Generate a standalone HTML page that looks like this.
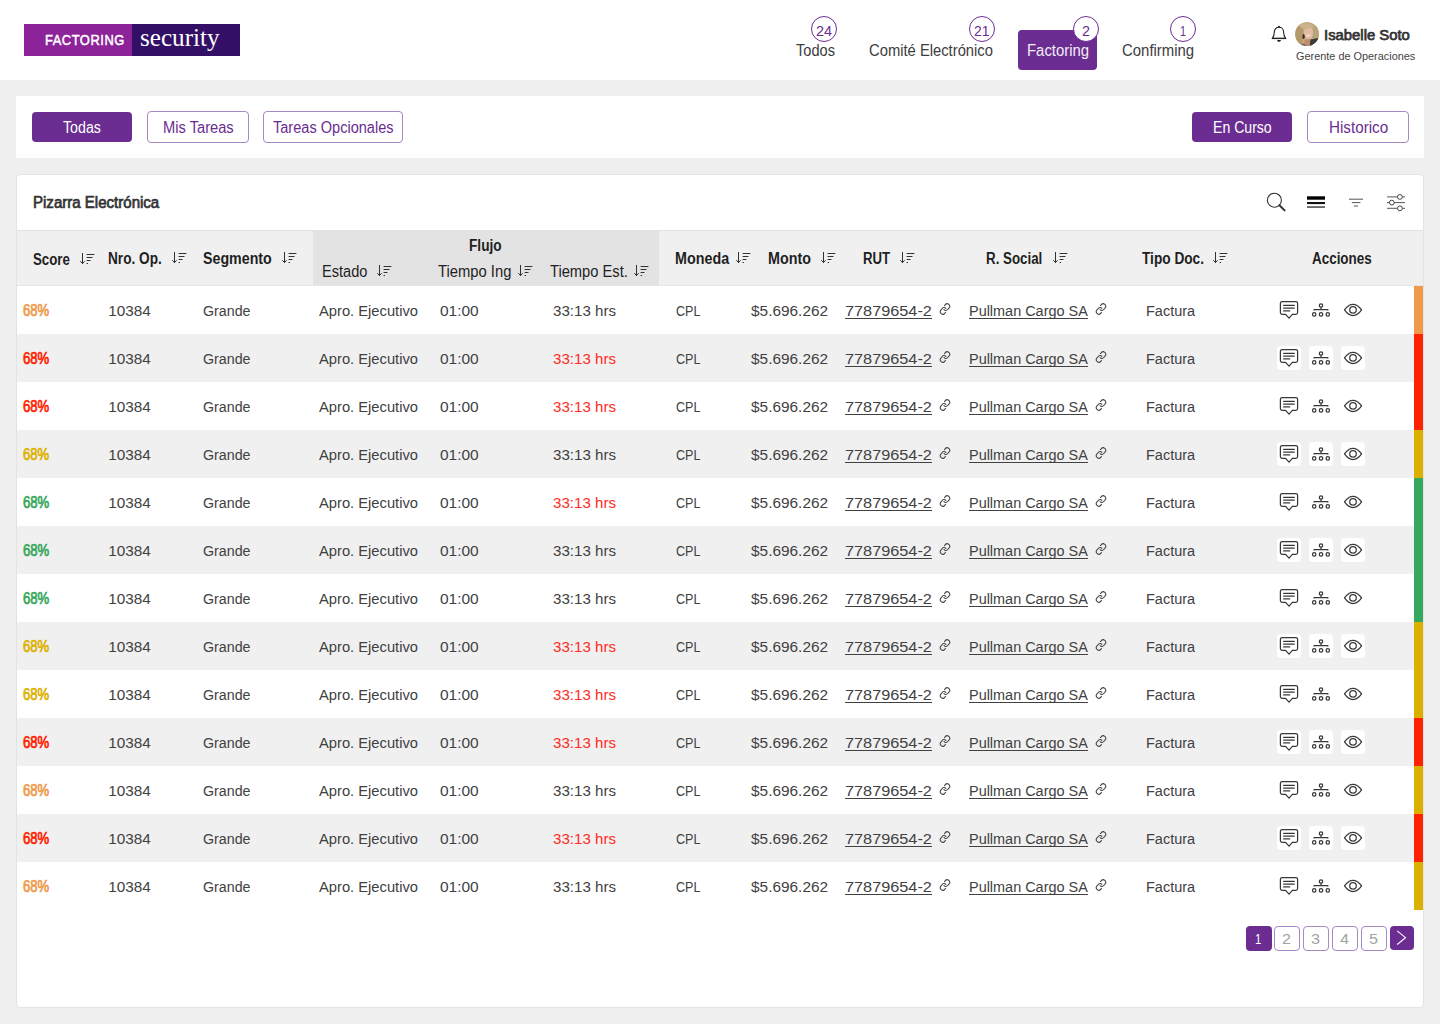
<!DOCTYPE html>
<html><head><meta charset="utf-8"><style>
html,body{margin:0;padding:0;width:1440px;height:1024px;overflow:hidden;background:#efefef;}
body{position:relative;font-family:"Liberation Sans", sans-serif;}
.t{position:absolute;white-space:nowrap;transform-origin:0 0;}
</style></head><body>
<div style="position:absolute;left:0px;top:0px;width:1440px;height:80px;background:#fff"></div>
<div style="position:absolute;left:24px;top:24px;width:108px;height:32px;background:#8c2398"></div>
<div style="position:absolute;left:132px;top:24px;width:108px;height:32px;background:#331066"></div>
<div class="t" style="left:45.00px;top:-10.00px;font-size:14.8px;line-height:100px;color:#fff;font-weight:normal;font-family:'Liberation Sans', sans-serif;transform:scaleX(0.8728);-webkit-text-stroke:0.5px #fff;letter-spacing:0.6px;">FACTORING</div>
<div class="t" style="left:139.75px;top:-12.00px;font-size:25.5px;line-height:100px;color:#fff;font-weight:normal;font-family:'Liberation Serif', serif;transform:scaleX(0.9853);">security</div>
<div style="position:absolute;left:1018px;top:30px;width:79px;height:40px;background:#6b2d91;border-radius:4px"></div>
<div class="t" style="left:795.90px;top:1.00px;font-size:15.6px;line-height:100px;color:#3d3d3d;font-weight:normal;font-family:'Liberation Sans', sans-serif;transform:scaleX(0.9370);">Todos</div>
<div class="t" style="left:868.70px;top:1.00px;font-size:15.6px;line-height:100px;color:#3d3d3d;font-weight:normal;font-family:'Liberation Sans', sans-serif;transform:scaleX(0.9472);">Comité Electrónico</div>
<div class="t" style="left:1026.70px;top:1.00px;font-size:15.6px;line-height:100px;color:#f3eef7;font-weight:normal;font-family:'Liberation Sans', sans-serif;transform:scaleX(0.9551);">Factoring</div>
<div class="t" style="left:1121.80px;top:1.00px;font-size:15.6px;line-height:100px;color:#3d3d3d;font-weight:normal;font-family:'Liberation Sans', sans-serif;transform:scaleX(0.9572);">Confirming</div>
<div style="position:absolute;left:810.5px;top:16.0px;width:26px;height:26px;box-sizing:border-box;border:1px solid #6b2d91;border-radius:50%;background:transparent"></div>
<div class="t" style="left:815.90px;top:-19.00px;font-size:15.5px;line-height:100px;color:#6b2d91;font-weight:normal;font-family:'Liberation Sans', sans-serif;transform:scaleX(0.9341);">24</div>
<div style="position:absolute;left:968.5px;top:16.0px;width:26px;height:26px;box-sizing:border-box;border:1px solid #6b2d91;border-radius:50%;background:transparent"></div>
<div class="t" style="left:974.00px;top:-19.00px;font-size:15.5px;line-height:100px;color:#6b2d91;font-weight:normal;font-family:'Liberation Sans', sans-serif;transform:scaleX(0.8993);">21</div>
<div style="position:absolute;left:1072.5px;top:16.0px;width:26px;height:26px;box-sizing:border-box;border:1px solid #6b2d91;border-radius:50%;background:#fff"></div>
<div class="t" style="left:1081.50px;top:-19.00px;font-size:15.5px;line-height:100px;color:#6b2d91;font-weight:normal;font-family:'Liberation Sans', sans-serif;transform:scaleX(0.9283);">2</div>
<div style="position:absolute;left:1169.5px;top:16.0px;width:26px;height:26px;box-sizing:border-box;border:1px solid #6b2d91;border-radius:50%;background:transparent"></div>
<div class="t" style="left:1179.50px;top:-19.00px;font-size:15.5px;line-height:100px;color:#6b2d91;font-weight:normal;font-family:'Liberation Sans', sans-serif;transform:scaleX(0.6962);">1</div>
<svg style="position:absolute;left:1270px;top:24px" width="18" height="20" viewBox="0 0 18 20" fill="none" stroke="#222" stroke-width="1.1"><path d="M2.4 14.4 C3.6 12.6 4.3 11.2 4.3 8.2 C4.3 5 6.3 3.3 9 3.3 C11.7 3.3 13.6 5 13.6 8.2 C13.6 11.2 14.3 12.6 15.6 14.4 Z" stroke-linejoin="round"/><path d="M1.8 14.5 H16.2" stroke-width="1.2"/><circle cx="8.95" cy="2.7" r="1" fill="#222" stroke="none"/><path d="M7.1 16 H10.9 C10.9 17.1 10.1 17.8 9 17.8 C7.9 17.8 7.1 17.1 7.1 16 Z" fill="#222" stroke="none"/></svg>
<svg style="position:absolute;left:1295px;top:22px" width="24" height="24" viewBox="0 0 24 24"><defs><clipPath id="avc"><circle cx="12" cy="12" r="12"/></clipPath></defs><g clip-path="url(#avc)"><rect x="-2" y="-2" width="28" height="28" fill="#c2a97f"/><ellipse cx="4.5" cy="13" rx="4" ry="9" fill="#b49a6a"/><ellipse cx="20.5" cy="12" rx="3.5" ry="8" fill="#b8a47a"/><ellipse cx="13" cy="21.5" rx="4.2" ry="4.5" fill="#c08d6c"/><path d="M15.5 17.5 L25 15.5 L25 26 L14.5 26 Z" fill="#3b3a36"/><ellipse cx="6" cy="24.5" rx="6" ry="3" fill="#6b6a65"/><ellipse cx="13.5" cy="10.8" rx="4.6" ry="6.3" fill="#e2bca2"/><ellipse cx="13.4" cy="13.6" rx="2.4" ry="1" fill="#f2ddd0"/><ellipse cx="8.6" cy="14.5" rx="1.2" ry="2.6" fill="#3d2c22"/><ellipse cx="11.5" cy="4.2" rx="6.5" ry="2.6" fill="#cbb38c"/></g></svg>
<div class="t" style="left:1323.60px;top:-15.00px;font-size:15.3px;line-height:100px;color:#333;font-weight:normal;font-family:'Liberation Sans', sans-serif;transform:scaleX(0.9710);-webkit-text-stroke:0.75px #333;">Isabelle Soto</div>
<div class="t" style="left:1295.70px;top:6.00px;font-size:11.3px;line-height:100px;color:#444;font-weight:normal;font-family:'Liberation Sans', sans-serif;transform:scaleX(0.9641);">Gerente de Operaciones</div>
<div style="position:absolute;left:0px;top:80px;width:1440px;height:944px;background:#efefef"></div>
<div style="position:absolute;left:16px;top:96px;width:1408px;height:62px;background:#fff"></div>
<div style="position:absolute;left:32px;top:112px;width:100px;height:30px;background:#6b2d91;border-radius:4px"></div>
<div class="t" style="left:62.90px;top:78.00px;font-size:16px;line-height:100px;color:#fff;font-weight:normal;font-family:'Liberation Sans', sans-serif;transform:scaleX(0.8878);">Todas</div>
<div style="position:absolute;left:147.1px;top:111.1px;width:101.7px;height:31.8px;box-sizing:border-box;border:1.7px solid #a887c5;border-radius:4px"></div>
<div class="t" style="left:162.50px;top:78.00px;font-size:16px;line-height:100px;color:#6b2d91;font-weight:normal;font-family:'Liberation Sans', sans-serif;transform:scaleX(0.9175);">Mis Tareas</div>
<div style="position:absolute;left:263.1px;top:111.1px;width:139.7px;height:31.8px;box-sizing:border-box;border:1.7px solid #a887c5;border-radius:4px"></div>
<div class="t" style="left:272.80px;top:78.00px;font-size:16px;line-height:100px;color:#6b2d91;font-weight:normal;font-family:'Liberation Sans', sans-serif;transform:scaleX(0.9094);">Tareas Opcionales</div>
<div style="position:absolute;left:1192px;top:112px;width:100px;height:30px;background:#6b2d91;border-radius:4px"></div>
<div class="t" style="left:1212.50px;top:78.00px;font-size:16px;line-height:100px;color:#fff;font-weight:normal;font-family:'Liberation Sans', sans-serif;transform:scaleX(0.8802);">En Curso</div>
<div style="position:absolute;left:1307.1px;top:111.1px;width:101.7px;height:31.8px;box-sizing:border-box;border:1.7px solid #a887c5;border-radius:4px"></div>
<div class="t" style="left:1328.90px;top:78.00px;font-size:16px;line-height:100px;color:#6b2d91;font-weight:normal;font-family:'Liberation Sans', sans-serif;transform:scaleX(0.9512);">Historico</div>
<div style="position:absolute;left:16px;top:174px;width:1408px;height:834px;box-sizing:border-box;background:#fff;border:1px solid #e3e3e3;border-radius:4px"></div>
<div class="t" style="left:32.50px;top:153.00px;font-size:16px;line-height:100px;color:#333;font-weight:normal;font-family:'Liberation Sans', sans-serif;transform:scaleX(0.9401);-webkit-text-stroke:0.7px #333;">Pizarra Electrónica</div>
<svg style="position:absolute;left:1264px;top:190px" width="160" height="24" viewBox="1264 190 160 24" fill="none" stroke="#333"><circle cx="1274.4" cy="200.2" r="7" stroke-width="1.1"/><path d="M1279.4 205.2 L1284.6 210.4" stroke-width="2" stroke-linecap="round"/><rect x="1307" y="196.3" width="18" height="3.4" fill="#000" stroke="none"/><rect x="1307" y="202" width="18" height="2.1" fill="#111" stroke="none"/><rect x="1307" y="206.3" width="18" height="1.5" fill="#444" stroke="none"/><path d="M1349 199.2 H1363 M1351.8 202.6 H1360.4 M1353.8 206 H1358" stroke="#555" stroke-width="1"/><path d="M1387 196.9 H1405 M1387 202.6 H1405 M1387 208.3 H1405" stroke="#555" stroke-width="1"/><circle cx="1399.9" cy="196.9" r="2.4" fill="#fff" stroke="#444" stroke-width="1"/><circle cx="1391.8" cy="202.6" r="2.4" fill="#fff" stroke="#444" stroke-width="1"/><circle cx="1399.9" cy="208.3" r="2.4" fill="#fff" stroke="#444" stroke-width="1"/></svg>
<div style="position:absolute;left:17px;top:230px;width:1406px;height:1px;background:#e3e3e3"></div>
<div style="position:absolute;left:17px;top:231px;width:1406px;height:55px;background:#f0f0f0"></div>
<div style="position:absolute;left:313px;top:231px;width:346px;height:55px;background:#e3e3e3"></div>
<div style="position:absolute;left:17px;top:285px;width:1406px;height:1px;background:#e6e6e6"></div>
<div class="t" style="left:33.40px;top:210.00px;font-size:16px;line-height:100px;color:#1f1f1f;font-weight:bold;font-family:'Liberation Sans', sans-serif;transform:scaleX(0.8299);">Score</div>
<svg style="position:absolute;left:80px;top:253px" width="15" height="12" viewBox="0 0 15 12" fill="none" stroke="#333" stroke-width="1" stroke-linecap="round"><path d="M2.5 0.3 V10.6 M0.6 8.5 L2.5 10.6 L4.4 8.5"/><path d="M7 1.5 H14 M7 4.5 H12.1 M7 7.5 H10.1 M7 10.5 H7.6"/></svg>
<div class="t" style="left:107.50px;top:209.00px;font-size:16px;line-height:100px;color:#1f1f1f;font-weight:bold;font-family:'Liberation Sans', sans-serif;transform:scaleX(0.8518);">Nro. Op.</div>
<svg style="position:absolute;left:172px;top:251.8px" width="15" height="12" viewBox="0 0 15 12" fill="none" stroke="#333" stroke-width="1" stroke-linecap="round"><path d="M2.5 0.3 V10.6 M0.6 8.5 L2.5 10.6 L4.4 8.5"/><path d="M7 1.5 H14 M7 4.5 H12.1 M7 7.5 H10.1 M7 10.5 H7.6"/></svg>
<div class="t" style="left:203.25px;top:209.00px;font-size:16px;line-height:100px;color:#1f1f1f;font-weight:bold;font-family:'Liberation Sans', sans-serif;transform:scaleX(0.8889);">Segmento</div>
<svg style="position:absolute;left:281.75px;top:251.8px" width="15" height="12" viewBox="0 0 15 12" fill="none" stroke="#333" stroke-width="1" stroke-linecap="round"><path d="M2.5 0.3 V10.6 M0.6 8.5 L2.5 10.6 L4.4 8.5"/><path d="M7 1.5 H14 M7 4.5 H12.1 M7 7.5 H10.1 M7 10.5 H7.6"/></svg>
<div class="t" style="left:468.70px;top:196.00px;font-size:16px;line-height:100px;color:#1f1f1f;font-weight:bold;font-family:'Liberation Sans', sans-serif;transform:scaleX(0.8532);">Flujo</div>
<div class="t" style="left:321.60px;top:222.00px;font-size:16px;line-height:100px;color:#1f1f1f;font-weight:normal;font-family:'Liberation Sans', sans-serif;transform:scaleX(0.9115);">Estado</div>
<svg style="position:absolute;left:377px;top:265px" width="15" height="12" viewBox="0 0 15 12" fill="none" stroke="#333" stroke-width="1" stroke-linecap="round"><path d="M2.5 0.3 V10.6 M0.6 8.5 L2.5 10.6 L4.4 8.5"/><path d="M7 1.5 H14 M7 4.5 H12.1 M7 7.5 H10.1 M7 10.5 H7.6"/></svg>
<div class="t" style="left:438.30px;top:222.00px;font-size:16px;line-height:100px;color:#1f1f1f;font-weight:normal;font-family:'Liberation Sans', sans-serif;transform:scaleX(0.9240);">Tiempo Ing</div>
<svg style="position:absolute;left:517.5px;top:265px" width="15" height="12" viewBox="0 0 15 12" fill="none" stroke="#333" stroke-width="1" stroke-linecap="round"><path d="M2.5 0.3 V10.6 M0.6 8.5 L2.5 10.6 L4.4 8.5"/><path d="M7 1.5 H14 M7 4.5 H12.1 M7 7.5 H10.1 M7 10.5 H7.6"/></svg>
<div class="t" style="left:549.70px;top:222.00px;font-size:16px;line-height:100px;color:#1f1f1f;font-weight:normal;font-family:'Liberation Sans', sans-serif;transform:scaleX(0.9178);">Tiempo Est.</div>
<svg style="position:absolute;left:633.7px;top:265px" width="15" height="12" viewBox="0 0 15 12" fill="none" stroke="#333" stroke-width="1" stroke-linecap="round"><path d="M2.5 0.3 V10.6 M0.6 8.5 L2.5 10.6 L4.4 8.5"/><path d="M7 1.5 H14 M7 4.5 H12.1 M7 7.5 H10.1 M7 10.5 H7.6"/></svg>
<div class="t" style="left:675.30px;top:209.00px;font-size:16px;line-height:100px;color:#1f1f1f;font-weight:bold;font-family:'Liberation Sans', sans-serif;transform:scaleX(0.8950);">Moneda</div>
<svg style="position:absolute;left:736px;top:251.8px" width="15" height="12" viewBox="0 0 15 12" fill="none" stroke="#333" stroke-width="1" stroke-linecap="round"><path d="M2.5 0.3 V10.6 M0.6 8.5 L2.5 10.6 L4.4 8.5"/><path d="M7 1.5 H14 M7 4.5 H12.1 M7 7.5 H10.1 M7 10.5 H7.6"/></svg>
<div class="t" style="left:767.80px;top:209.00px;font-size:16px;line-height:100px;color:#1f1f1f;font-weight:bold;font-family:'Liberation Sans', sans-serif;transform:scaleX(0.8940);">Monto</div>
<svg style="position:absolute;left:820.6px;top:251.8px" width="15" height="12" viewBox="0 0 15 12" fill="none" stroke="#333" stroke-width="1" stroke-linecap="round"><path d="M2.5 0.3 V10.6 M0.6 8.5 L2.5 10.6 L4.4 8.5"/><path d="M7 1.5 H14 M7 4.5 H12.1 M7 7.5 H10.1 M7 10.5 H7.6"/></svg>
<div class="t" style="left:862.50px;top:209.00px;font-size:16px;line-height:100px;color:#1f1f1f;font-weight:bold;font-family:'Liberation Sans', sans-serif;transform:scaleX(0.8242);">RUT</div>
<svg style="position:absolute;left:899.7px;top:251.8px" width="15" height="12" viewBox="0 0 15 12" fill="none" stroke="#333" stroke-width="1" stroke-linecap="round"><path d="M2.5 0.3 V10.6 M0.6 8.5 L2.5 10.6 L4.4 8.5"/><path d="M7 1.5 H14 M7 4.5 H12.1 M7 7.5 H10.1 M7 10.5 H7.6"/></svg>
<div class="t" style="left:986.00px;top:209.00px;font-size:16px;line-height:100px;color:#1f1f1f;font-weight:bold;font-family:'Liberation Sans', sans-serif;transform:scaleX(0.8330);">R. Social</div>
<svg style="position:absolute;left:1053px;top:251.8px" width="15" height="12" viewBox="0 0 15 12" fill="none" stroke="#333" stroke-width="1" stroke-linecap="round"><path d="M2.5 0.3 V10.6 M0.6 8.5 L2.5 10.6 L4.4 8.5"/><path d="M7 1.5 H14 M7 4.5 H12.1 M7 7.5 H10.1 M7 10.5 H7.6"/></svg>
<div class="t" style="left:1142.00px;top:209.00px;font-size:16px;line-height:100px;color:#1f1f1f;font-weight:bold;font-family:'Liberation Sans', sans-serif;transform:scaleX(0.8541);">Tipo Doc.</div>
<svg style="position:absolute;left:1213.4px;top:251.8px" width="15" height="12" viewBox="0 0 15 12" fill="none" stroke="#333" stroke-width="1" stroke-linecap="round"><path d="M2.5 0.3 V10.6 M0.6 8.5 L2.5 10.6 L4.4 8.5"/><path d="M7 1.5 H14 M7 4.5 H12.1 M7 7.5 H10.1 M7 10.5 H7.6"/></svg>
<div class="t" style="left:1312.00px;top:209.00px;font-size:16px;line-height:100px;color:#1f1f1f;font-weight:bold;font-family:'Liberation Sans', sans-serif;transform:scaleX(0.8392);">Acciones</div>
<div style="position:absolute;left:17px;top:286px;width:1397px;height:48px;background:#fff"></div>
<div style="position:absolute;left:1414px;top:286px;width:9px;height:48px;background:#f0994a"></div>
<div class="t" style="left:23.30px;top:261.00px;font-size:16px;line-height:100px;color:#f0994a;font-weight:normal;font-family:'Liberation Sans', sans-serif;transform:scaleX(0.8183);-webkit-text-stroke:0.7px #f0994a;">68%</div>
<div class="t" style="left:108.30px;top:261.00px;font-size:15.3px;line-height:100px;color:#414141;font-weight:normal;font-family:'Liberation Sans', sans-serif;">10384</div>
<div class="t" style="left:203.30px;top:261.00px;font-size:15.3px;line-height:100px;color:#414141;font-weight:normal;font-family:'Liberation Sans', sans-serif;transform:scaleX(0.9309);">Grande</div>
<div class="t" style="left:319.20px;top:261.00px;font-size:15.3px;line-height:100px;color:#414141;font-weight:normal;font-family:'Liberation Sans', sans-serif;transform:scaleX(0.9620);">Apro. Ejecutivo</div>
<div class="t" style="left:440.20px;top:261.00px;font-size:15.3px;line-height:100px;color:#414141;font-weight:normal;font-family:'Liberation Sans', sans-serif;transform:scaleX(1.0110);">01:00</div>
<div class="t" style="left:553.40px;top:261.00px;font-size:15.3px;line-height:100px;color:#414141;font-weight:normal;font-family:'Liberation Sans', sans-serif;transform:scaleX(0.9877);">33:13 hrs</div>
<div class="t" style="left:675.60px;top:261.00px;font-size:15.3px;line-height:100px;color:#414141;font-weight:normal;font-family:'Liberation Sans', sans-serif;transform:scaleX(0.8199);">CPL</div>
<div class="t" style="left:750.60px;top:261.00px;font-size:15.3px;line-height:100px;color:#414141;font-weight:normal;font-family:'Liberation Sans', sans-serif;transform:scaleX(1.0068);">$5.696.262</div>
<div class="t" style="left:845.00px;top:261.00px;font-size:15.3px;line-height:100px;color:#414141;font-weight:normal;font-family:'Liberation Sans', sans-serif;transform:scaleX(1.0640);">77879654-2</div>
<div style="position:absolute;left:845px;top:317.5px;width:87px;height:1px;background:#414141"></div>
<svg style="position:absolute;left:938.5px;top:303px" width="12" height="12" viewBox="0 0 24 24" fill="none" stroke="#444" stroke-width="2.1" stroke-linecap="round"><g transform="rotate(-6 12 12)"><path d="M10 13a5 5 0 0 0 7.54.54l3-3a5 5 0 0 0-7.07-7.07l-1.72 1.71"/><path d="M14 11a5 5 0 0 0-7.54-.54l-3 3a5 5 0 0 0 7.07 7.07l1.71-1.71"/></g></svg>
<div class="t" style="left:969.00px;top:261.00px;font-size:15.3px;line-height:100px;color:#414141;font-weight:normal;font-family:'Liberation Sans', sans-serif;transform:scaleX(0.9439);">Pullman Cargo SA</div>
<div style="position:absolute;left:969px;top:317.5px;width:119px;height:1px;background:#414141"></div>
<svg style="position:absolute;left:1094.5px;top:303px" width="12" height="12" viewBox="0 0 24 24" fill="none" stroke="#444" stroke-width="2.1" stroke-linecap="round"><g transform="rotate(-6 12 12)"><path d="M10 13a5 5 0 0 0 7.54.54l3-3a5 5 0 0 0-7.07-7.07l-1.72 1.71"/><path d="M14 11a5 5 0 0 0-7.54-.54l-3 3a5 5 0 0 0 7.07 7.07l1.71-1.71"/></g></svg>
<div class="t" style="left:1145.60px;top:261.00px;font-size:15.3px;line-height:100px;color:#414141;font-weight:normal;font-family:'Liberation Sans', sans-serif;transform:scaleX(0.9464);">Factura</div>
<svg style="position:absolute;left:1276px;top:298px" width="90" height="24" viewBox="1276 0 90 24" fill="none" stroke="#383838" stroke-width="1.25"><path d="M1282.2 3.5 H1295.8 Q1297.6 3.5 1297.6 5.3 V14.6 Q1297.6 16.4 1295.8 16.4 H1292.4 L1289 20.2 L1285.6 16.4 H1282.2 Q1280.4 16.4 1280.4 14.6 V5.3 Q1280.4 3.5 1282.2 3.5 Z" stroke-linejoin="round"/><path d="M1283.6 7.3 H1294.3 M1283.6 10.1 H1294.3 M1283.6 12.9 H1289.6" stroke-linecap="round"/><circle cx="1321" cy="7.5" r="1.7"/><path d="M1321 9.1 V11.5 M1314.2 12.4 V11.5 H1327.8 V12.4"/><circle cx="1314.2" cy="16.4" r="1.7"/><circle cx="1321" cy="16.4" r="1.7"/><circle cx="1327.8" cy="16.4" r="1.7"/><path d="M1344.5 11.8 Q1348.5 6.3 1353 6.3 Q1357.5 6.3 1361.6 11.8 Q1357.5 17.5 1353 17.5 Q1348.5 17.5 1344.5 11.8 Z" stroke-linejoin="round"/><circle cx="1353" cy="11.8" r="3.3"/></svg>
<div style="position:absolute;left:17px;top:334px;width:1397px;height:48px;background:#f0f0f0"></div>
<div style="position:absolute;left:1414px;top:334px;width:9px;height:48px;background:#ff2200"></div>
<div class="t" style="left:23.30px;top:309.00px;font-size:16px;line-height:100px;color:#ff2200;font-weight:normal;font-family:'Liberation Sans', sans-serif;transform:scaleX(0.8183);-webkit-text-stroke:0.7px #ff2200;">68%</div>
<div class="t" style="left:108.30px;top:309.00px;font-size:15.3px;line-height:100px;color:#414141;font-weight:normal;font-family:'Liberation Sans', sans-serif;">10384</div>
<div class="t" style="left:203.30px;top:309.00px;font-size:15.3px;line-height:100px;color:#414141;font-weight:normal;font-family:'Liberation Sans', sans-serif;transform:scaleX(0.9309);">Grande</div>
<div class="t" style="left:319.20px;top:309.00px;font-size:15.3px;line-height:100px;color:#414141;font-weight:normal;font-family:'Liberation Sans', sans-serif;transform:scaleX(0.9620);">Apro. Ejecutivo</div>
<div class="t" style="left:440.20px;top:309.00px;font-size:15.3px;line-height:100px;color:#414141;font-weight:normal;font-family:'Liberation Sans', sans-serif;transform:scaleX(1.0110);">01:00</div>
<div class="t" style="left:553.40px;top:309.00px;font-size:15.3px;line-height:100px;color:#ff2a1a;font-weight:normal;font-family:'Liberation Sans', sans-serif;transform:scaleX(0.9877);">33:13 hrs</div>
<div class="t" style="left:675.60px;top:309.00px;font-size:15.3px;line-height:100px;color:#414141;font-weight:normal;font-family:'Liberation Sans', sans-serif;transform:scaleX(0.8199);">CPL</div>
<div class="t" style="left:750.60px;top:309.00px;font-size:15.3px;line-height:100px;color:#414141;font-weight:normal;font-family:'Liberation Sans', sans-serif;transform:scaleX(1.0068);">$5.696.262</div>
<div class="t" style="left:845.00px;top:309.00px;font-size:15.3px;line-height:100px;color:#414141;font-weight:normal;font-family:'Liberation Sans', sans-serif;transform:scaleX(1.0640);">77879654-2</div>
<div style="position:absolute;left:845px;top:365.5px;width:87px;height:1px;background:#414141"></div>
<svg style="position:absolute;left:938.5px;top:351px" width="12" height="12" viewBox="0 0 24 24" fill="none" stroke="#444" stroke-width="2.1" stroke-linecap="round"><g transform="rotate(-6 12 12)"><path d="M10 13a5 5 0 0 0 7.54.54l3-3a5 5 0 0 0-7.07-7.07l-1.72 1.71"/><path d="M14 11a5 5 0 0 0-7.54-.54l-3 3a5 5 0 0 0 7.07 7.07l1.71-1.71"/></g></svg>
<div class="t" style="left:969.00px;top:309.00px;font-size:15.3px;line-height:100px;color:#414141;font-weight:normal;font-family:'Liberation Sans', sans-serif;transform:scaleX(0.9439);">Pullman Cargo SA</div>
<div style="position:absolute;left:969px;top:365.5px;width:119px;height:1px;background:#414141"></div>
<svg style="position:absolute;left:1094.5px;top:351px" width="12" height="12" viewBox="0 0 24 24" fill="none" stroke="#444" stroke-width="2.1" stroke-linecap="round"><g transform="rotate(-6 12 12)"><path d="M10 13a5 5 0 0 0 7.54.54l3-3a5 5 0 0 0-7.07-7.07l-1.72 1.71"/><path d="M14 11a5 5 0 0 0-7.54-.54l-3 3a5 5 0 0 0 7.07 7.07l1.71-1.71"/></g></svg>
<div class="t" style="left:1145.60px;top:309.00px;font-size:15.3px;line-height:100px;color:#414141;font-weight:normal;font-family:'Liberation Sans', sans-serif;transform:scaleX(0.9464);">Factura</div>
<div style="position:absolute;left:1277px;top:346px;width:24px;height:24px;background:#fff;border-radius:4px"></div>
<div style="position:absolute;left:1309px;top:346px;width:24px;height:24px;background:#fff;border-radius:4px"></div>
<div style="position:absolute;left:1341px;top:346px;width:24px;height:24px;background:#fff;border-radius:4px"></div>
<svg style="position:absolute;left:1276px;top:346px" width="90" height="24" viewBox="1276 0 90 24" fill="none" stroke="#383838" stroke-width="1.25"><path d="M1282.2 3.5 H1295.8 Q1297.6 3.5 1297.6 5.3 V14.6 Q1297.6 16.4 1295.8 16.4 H1292.4 L1289 20.2 L1285.6 16.4 H1282.2 Q1280.4 16.4 1280.4 14.6 V5.3 Q1280.4 3.5 1282.2 3.5 Z" stroke-linejoin="round"/><path d="M1283.6 7.3 H1294.3 M1283.6 10.1 H1294.3 M1283.6 12.9 H1289.6" stroke-linecap="round"/><circle cx="1321" cy="7.5" r="1.7"/><path d="M1321 9.1 V11.5 M1314.2 12.4 V11.5 H1327.8 V12.4"/><circle cx="1314.2" cy="16.4" r="1.7"/><circle cx="1321" cy="16.4" r="1.7"/><circle cx="1327.8" cy="16.4" r="1.7"/><path d="M1344.5 11.8 Q1348.5 6.3 1353 6.3 Q1357.5 6.3 1361.6 11.8 Q1357.5 17.5 1353 17.5 Q1348.5 17.5 1344.5 11.8 Z" stroke-linejoin="round"/><circle cx="1353" cy="11.8" r="3.3"/></svg>
<div style="position:absolute;left:17px;top:382px;width:1397px;height:48px;background:#fff"></div>
<div style="position:absolute;left:1414px;top:382px;width:9px;height:48px;background:#ff2200"></div>
<div class="t" style="left:23.30px;top:357.00px;font-size:16px;line-height:100px;color:#ff2200;font-weight:normal;font-family:'Liberation Sans', sans-serif;transform:scaleX(0.8183);-webkit-text-stroke:0.7px #ff2200;">68%</div>
<div class="t" style="left:108.30px;top:357.00px;font-size:15.3px;line-height:100px;color:#414141;font-weight:normal;font-family:'Liberation Sans', sans-serif;">10384</div>
<div class="t" style="left:203.30px;top:357.00px;font-size:15.3px;line-height:100px;color:#414141;font-weight:normal;font-family:'Liberation Sans', sans-serif;transform:scaleX(0.9309);">Grande</div>
<div class="t" style="left:319.20px;top:357.00px;font-size:15.3px;line-height:100px;color:#414141;font-weight:normal;font-family:'Liberation Sans', sans-serif;transform:scaleX(0.9620);">Apro. Ejecutivo</div>
<div class="t" style="left:440.20px;top:357.00px;font-size:15.3px;line-height:100px;color:#414141;font-weight:normal;font-family:'Liberation Sans', sans-serif;transform:scaleX(1.0110);">01:00</div>
<div class="t" style="left:553.40px;top:357.00px;font-size:15.3px;line-height:100px;color:#ff2a1a;font-weight:normal;font-family:'Liberation Sans', sans-serif;transform:scaleX(0.9877);">33:13 hrs</div>
<div class="t" style="left:675.60px;top:357.00px;font-size:15.3px;line-height:100px;color:#414141;font-weight:normal;font-family:'Liberation Sans', sans-serif;transform:scaleX(0.8199);">CPL</div>
<div class="t" style="left:750.60px;top:357.00px;font-size:15.3px;line-height:100px;color:#414141;font-weight:normal;font-family:'Liberation Sans', sans-serif;transform:scaleX(1.0068);">$5.696.262</div>
<div class="t" style="left:845.00px;top:357.00px;font-size:15.3px;line-height:100px;color:#414141;font-weight:normal;font-family:'Liberation Sans', sans-serif;transform:scaleX(1.0640);">77879654-2</div>
<div style="position:absolute;left:845px;top:413.5px;width:87px;height:1px;background:#414141"></div>
<svg style="position:absolute;left:938.5px;top:399px" width="12" height="12" viewBox="0 0 24 24" fill="none" stroke="#444" stroke-width="2.1" stroke-linecap="round"><g transform="rotate(-6 12 12)"><path d="M10 13a5 5 0 0 0 7.54.54l3-3a5 5 0 0 0-7.07-7.07l-1.72 1.71"/><path d="M14 11a5 5 0 0 0-7.54-.54l-3 3a5 5 0 0 0 7.07 7.07l1.71-1.71"/></g></svg>
<div class="t" style="left:969.00px;top:357.00px;font-size:15.3px;line-height:100px;color:#414141;font-weight:normal;font-family:'Liberation Sans', sans-serif;transform:scaleX(0.9439);">Pullman Cargo SA</div>
<div style="position:absolute;left:969px;top:413.5px;width:119px;height:1px;background:#414141"></div>
<svg style="position:absolute;left:1094.5px;top:399px" width="12" height="12" viewBox="0 0 24 24" fill="none" stroke="#444" stroke-width="2.1" stroke-linecap="round"><g transform="rotate(-6 12 12)"><path d="M10 13a5 5 0 0 0 7.54.54l3-3a5 5 0 0 0-7.07-7.07l-1.72 1.71"/><path d="M14 11a5 5 0 0 0-7.54-.54l-3 3a5 5 0 0 0 7.07 7.07l1.71-1.71"/></g></svg>
<div class="t" style="left:1145.60px;top:357.00px;font-size:15.3px;line-height:100px;color:#414141;font-weight:normal;font-family:'Liberation Sans', sans-serif;transform:scaleX(0.9464);">Factura</div>
<svg style="position:absolute;left:1276px;top:394px" width="90" height="24" viewBox="1276 0 90 24" fill="none" stroke="#383838" stroke-width="1.25"><path d="M1282.2 3.5 H1295.8 Q1297.6 3.5 1297.6 5.3 V14.6 Q1297.6 16.4 1295.8 16.4 H1292.4 L1289 20.2 L1285.6 16.4 H1282.2 Q1280.4 16.4 1280.4 14.6 V5.3 Q1280.4 3.5 1282.2 3.5 Z" stroke-linejoin="round"/><path d="M1283.6 7.3 H1294.3 M1283.6 10.1 H1294.3 M1283.6 12.9 H1289.6" stroke-linecap="round"/><circle cx="1321" cy="7.5" r="1.7"/><path d="M1321 9.1 V11.5 M1314.2 12.4 V11.5 H1327.8 V12.4"/><circle cx="1314.2" cy="16.4" r="1.7"/><circle cx="1321" cy="16.4" r="1.7"/><circle cx="1327.8" cy="16.4" r="1.7"/><path d="M1344.5 11.8 Q1348.5 6.3 1353 6.3 Q1357.5 6.3 1361.6 11.8 Q1357.5 17.5 1353 17.5 Q1348.5 17.5 1344.5 11.8 Z" stroke-linejoin="round"/><circle cx="1353" cy="11.8" r="3.3"/></svg>
<div style="position:absolute;left:17px;top:430px;width:1397px;height:48px;background:#f0f0f0"></div>
<div style="position:absolute;left:1414px;top:430px;width:9px;height:48px;background:#dcb000"></div>
<div class="t" style="left:23.30px;top:405.00px;font-size:16px;line-height:100px;color:#dcb000;font-weight:normal;font-family:'Liberation Sans', sans-serif;transform:scaleX(0.8183);-webkit-text-stroke:0.7px #dcb000;">68%</div>
<div class="t" style="left:108.30px;top:405.00px;font-size:15.3px;line-height:100px;color:#414141;font-weight:normal;font-family:'Liberation Sans', sans-serif;">10384</div>
<div class="t" style="left:203.30px;top:405.00px;font-size:15.3px;line-height:100px;color:#414141;font-weight:normal;font-family:'Liberation Sans', sans-serif;transform:scaleX(0.9309);">Grande</div>
<div class="t" style="left:319.20px;top:405.00px;font-size:15.3px;line-height:100px;color:#414141;font-weight:normal;font-family:'Liberation Sans', sans-serif;transform:scaleX(0.9620);">Apro. Ejecutivo</div>
<div class="t" style="left:440.20px;top:405.00px;font-size:15.3px;line-height:100px;color:#414141;font-weight:normal;font-family:'Liberation Sans', sans-serif;transform:scaleX(1.0110);">01:00</div>
<div class="t" style="left:553.40px;top:405.00px;font-size:15.3px;line-height:100px;color:#414141;font-weight:normal;font-family:'Liberation Sans', sans-serif;transform:scaleX(0.9877);">33:13 hrs</div>
<div class="t" style="left:675.60px;top:405.00px;font-size:15.3px;line-height:100px;color:#414141;font-weight:normal;font-family:'Liberation Sans', sans-serif;transform:scaleX(0.8199);">CPL</div>
<div class="t" style="left:750.60px;top:405.00px;font-size:15.3px;line-height:100px;color:#414141;font-weight:normal;font-family:'Liberation Sans', sans-serif;transform:scaleX(1.0068);">$5.696.262</div>
<div class="t" style="left:845.00px;top:405.00px;font-size:15.3px;line-height:100px;color:#414141;font-weight:normal;font-family:'Liberation Sans', sans-serif;transform:scaleX(1.0640);">77879654-2</div>
<div style="position:absolute;left:845px;top:461.5px;width:87px;height:1px;background:#414141"></div>
<svg style="position:absolute;left:938.5px;top:447px" width="12" height="12" viewBox="0 0 24 24" fill="none" stroke="#444" stroke-width="2.1" stroke-linecap="round"><g transform="rotate(-6 12 12)"><path d="M10 13a5 5 0 0 0 7.54.54l3-3a5 5 0 0 0-7.07-7.07l-1.72 1.71"/><path d="M14 11a5 5 0 0 0-7.54-.54l-3 3a5 5 0 0 0 7.07 7.07l1.71-1.71"/></g></svg>
<div class="t" style="left:969.00px;top:405.00px;font-size:15.3px;line-height:100px;color:#414141;font-weight:normal;font-family:'Liberation Sans', sans-serif;transform:scaleX(0.9439);">Pullman Cargo SA</div>
<div style="position:absolute;left:969px;top:461.5px;width:119px;height:1px;background:#414141"></div>
<svg style="position:absolute;left:1094.5px;top:447px" width="12" height="12" viewBox="0 0 24 24" fill="none" stroke="#444" stroke-width="2.1" stroke-linecap="round"><g transform="rotate(-6 12 12)"><path d="M10 13a5 5 0 0 0 7.54.54l3-3a5 5 0 0 0-7.07-7.07l-1.72 1.71"/><path d="M14 11a5 5 0 0 0-7.54-.54l-3 3a5 5 0 0 0 7.07 7.07l1.71-1.71"/></g></svg>
<div class="t" style="left:1145.60px;top:405.00px;font-size:15.3px;line-height:100px;color:#414141;font-weight:normal;font-family:'Liberation Sans', sans-serif;transform:scaleX(0.9464);">Factura</div>
<div style="position:absolute;left:1277px;top:442px;width:24px;height:24px;background:#fff;border-radius:4px"></div>
<div style="position:absolute;left:1309px;top:442px;width:24px;height:24px;background:#fff;border-radius:4px"></div>
<div style="position:absolute;left:1341px;top:442px;width:24px;height:24px;background:#fff;border-radius:4px"></div>
<svg style="position:absolute;left:1276px;top:442px" width="90" height="24" viewBox="1276 0 90 24" fill="none" stroke="#383838" stroke-width="1.25"><path d="M1282.2 3.5 H1295.8 Q1297.6 3.5 1297.6 5.3 V14.6 Q1297.6 16.4 1295.8 16.4 H1292.4 L1289 20.2 L1285.6 16.4 H1282.2 Q1280.4 16.4 1280.4 14.6 V5.3 Q1280.4 3.5 1282.2 3.5 Z" stroke-linejoin="round"/><path d="M1283.6 7.3 H1294.3 M1283.6 10.1 H1294.3 M1283.6 12.9 H1289.6" stroke-linecap="round"/><circle cx="1321" cy="7.5" r="1.7"/><path d="M1321 9.1 V11.5 M1314.2 12.4 V11.5 H1327.8 V12.4"/><circle cx="1314.2" cy="16.4" r="1.7"/><circle cx="1321" cy="16.4" r="1.7"/><circle cx="1327.8" cy="16.4" r="1.7"/><path d="M1344.5 11.8 Q1348.5 6.3 1353 6.3 Q1357.5 6.3 1361.6 11.8 Q1357.5 17.5 1353 17.5 Q1348.5 17.5 1344.5 11.8 Z" stroke-linejoin="round"/><circle cx="1353" cy="11.8" r="3.3"/></svg>
<div style="position:absolute;left:17px;top:478px;width:1397px;height:48px;background:#fff"></div>
<div style="position:absolute;left:1414px;top:478px;width:9px;height:48px;background:#34a85c"></div>
<div class="t" style="left:23.30px;top:453.00px;font-size:16px;line-height:100px;color:#34a85c;font-weight:normal;font-family:'Liberation Sans', sans-serif;transform:scaleX(0.8183);-webkit-text-stroke:0.7px #34a85c;">68%</div>
<div class="t" style="left:108.30px;top:453.00px;font-size:15.3px;line-height:100px;color:#414141;font-weight:normal;font-family:'Liberation Sans', sans-serif;">10384</div>
<div class="t" style="left:203.30px;top:453.00px;font-size:15.3px;line-height:100px;color:#414141;font-weight:normal;font-family:'Liberation Sans', sans-serif;transform:scaleX(0.9309);">Grande</div>
<div class="t" style="left:319.20px;top:453.00px;font-size:15.3px;line-height:100px;color:#414141;font-weight:normal;font-family:'Liberation Sans', sans-serif;transform:scaleX(0.9620);">Apro. Ejecutivo</div>
<div class="t" style="left:440.20px;top:453.00px;font-size:15.3px;line-height:100px;color:#414141;font-weight:normal;font-family:'Liberation Sans', sans-serif;transform:scaleX(1.0110);">01:00</div>
<div class="t" style="left:553.40px;top:453.00px;font-size:15.3px;line-height:100px;color:#ff2a1a;font-weight:normal;font-family:'Liberation Sans', sans-serif;transform:scaleX(0.9877);">33:13 hrs</div>
<div class="t" style="left:675.60px;top:453.00px;font-size:15.3px;line-height:100px;color:#414141;font-weight:normal;font-family:'Liberation Sans', sans-serif;transform:scaleX(0.8199);">CPL</div>
<div class="t" style="left:750.60px;top:453.00px;font-size:15.3px;line-height:100px;color:#414141;font-weight:normal;font-family:'Liberation Sans', sans-serif;transform:scaleX(1.0068);">$5.696.262</div>
<div class="t" style="left:845.00px;top:453.00px;font-size:15.3px;line-height:100px;color:#414141;font-weight:normal;font-family:'Liberation Sans', sans-serif;transform:scaleX(1.0640);">77879654-2</div>
<div style="position:absolute;left:845px;top:509.5px;width:87px;height:1px;background:#414141"></div>
<svg style="position:absolute;left:938.5px;top:495px" width="12" height="12" viewBox="0 0 24 24" fill="none" stroke="#444" stroke-width="2.1" stroke-linecap="round"><g transform="rotate(-6 12 12)"><path d="M10 13a5 5 0 0 0 7.54.54l3-3a5 5 0 0 0-7.07-7.07l-1.72 1.71"/><path d="M14 11a5 5 0 0 0-7.54-.54l-3 3a5 5 0 0 0 7.07 7.07l1.71-1.71"/></g></svg>
<div class="t" style="left:969.00px;top:453.00px;font-size:15.3px;line-height:100px;color:#414141;font-weight:normal;font-family:'Liberation Sans', sans-serif;transform:scaleX(0.9439);">Pullman Cargo SA</div>
<div style="position:absolute;left:969px;top:509.5px;width:119px;height:1px;background:#414141"></div>
<svg style="position:absolute;left:1094.5px;top:495px" width="12" height="12" viewBox="0 0 24 24" fill="none" stroke="#444" stroke-width="2.1" stroke-linecap="round"><g transform="rotate(-6 12 12)"><path d="M10 13a5 5 0 0 0 7.54.54l3-3a5 5 0 0 0-7.07-7.07l-1.72 1.71"/><path d="M14 11a5 5 0 0 0-7.54-.54l-3 3a5 5 0 0 0 7.07 7.07l1.71-1.71"/></g></svg>
<div class="t" style="left:1145.60px;top:453.00px;font-size:15.3px;line-height:100px;color:#414141;font-weight:normal;font-family:'Liberation Sans', sans-serif;transform:scaleX(0.9464);">Factura</div>
<svg style="position:absolute;left:1276px;top:490px" width="90" height="24" viewBox="1276 0 90 24" fill="none" stroke="#383838" stroke-width="1.25"><path d="M1282.2 3.5 H1295.8 Q1297.6 3.5 1297.6 5.3 V14.6 Q1297.6 16.4 1295.8 16.4 H1292.4 L1289 20.2 L1285.6 16.4 H1282.2 Q1280.4 16.4 1280.4 14.6 V5.3 Q1280.4 3.5 1282.2 3.5 Z" stroke-linejoin="round"/><path d="M1283.6 7.3 H1294.3 M1283.6 10.1 H1294.3 M1283.6 12.9 H1289.6" stroke-linecap="round"/><circle cx="1321" cy="7.5" r="1.7"/><path d="M1321 9.1 V11.5 M1314.2 12.4 V11.5 H1327.8 V12.4"/><circle cx="1314.2" cy="16.4" r="1.7"/><circle cx="1321" cy="16.4" r="1.7"/><circle cx="1327.8" cy="16.4" r="1.7"/><path d="M1344.5 11.8 Q1348.5 6.3 1353 6.3 Q1357.5 6.3 1361.6 11.8 Q1357.5 17.5 1353 17.5 Q1348.5 17.5 1344.5 11.8 Z" stroke-linejoin="round"/><circle cx="1353" cy="11.8" r="3.3"/></svg>
<div style="position:absolute;left:17px;top:526px;width:1397px;height:48px;background:#f0f0f0"></div>
<div style="position:absolute;left:1414px;top:526px;width:9px;height:48px;background:#34a85c"></div>
<div class="t" style="left:23.30px;top:501.00px;font-size:16px;line-height:100px;color:#34a85c;font-weight:normal;font-family:'Liberation Sans', sans-serif;transform:scaleX(0.8183);-webkit-text-stroke:0.7px #34a85c;">68%</div>
<div class="t" style="left:108.30px;top:501.00px;font-size:15.3px;line-height:100px;color:#414141;font-weight:normal;font-family:'Liberation Sans', sans-serif;">10384</div>
<div class="t" style="left:203.30px;top:501.00px;font-size:15.3px;line-height:100px;color:#414141;font-weight:normal;font-family:'Liberation Sans', sans-serif;transform:scaleX(0.9309);">Grande</div>
<div class="t" style="left:319.20px;top:501.00px;font-size:15.3px;line-height:100px;color:#414141;font-weight:normal;font-family:'Liberation Sans', sans-serif;transform:scaleX(0.9620);">Apro. Ejecutivo</div>
<div class="t" style="left:440.20px;top:501.00px;font-size:15.3px;line-height:100px;color:#414141;font-weight:normal;font-family:'Liberation Sans', sans-serif;transform:scaleX(1.0110);">01:00</div>
<div class="t" style="left:553.40px;top:501.00px;font-size:15.3px;line-height:100px;color:#414141;font-weight:normal;font-family:'Liberation Sans', sans-serif;transform:scaleX(0.9877);">33:13 hrs</div>
<div class="t" style="left:675.60px;top:501.00px;font-size:15.3px;line-height:100px;color:#414141;font-weight:normal;font-family:'Liberation Sans', sans-serif;transform:scaleX(0.8199);">CPL</div>
<div class="t" style="left:750.60px;top:501.00px;font-size:15.3px;line-height:100px;color:#414141;font-weight:normal;font-family:'Liberation Sans', sans-serif;transform:scaleX(1.0068);">$5.696.262</div>
<div class="t" style="left:845.00px;top:501.00px;font-size:15.3px;line-height:100px;color:#414141;font-weight:normal;font-family:'Liberation Sans', sans-serif;transform:scaleX(1.0640);">77879654-2</div>
<div style="position:absolute;left:845px;top:557.5px;width:87px;height:1px;background:#414141"></div>
<svg style="position:absolute;left:938.5px;top:543px" width="12" height="12" viewBox="0 0 24 24" fill="none" stroke="#444" stroke-width="2.1" stroke-linecap="round"><g transform="rotate(-6 12 12)"><path d="M10 13a5 5 0 0 0 7.54.54l3-3a5 5 0 0 0-7.07-7.07l-1.72 1.71"/><path d="M14 11a5 5 0 0 0-7.54-.54l-3 3a5 5 0 0 0 7.07 7.07l1.71-1.71"/></g></svg>
<div class="t" style="left:969.00px;top:501.00px;font-size:15.3px;line-height:100px;color:#414141;font-weight:normal;font-family:'Liberation Sans', sans-serif;transform:scaleX(0.9439);">Pullman Cargo SA</div>
<div style="position:absolute;left:969px;top:557.5px;width:119px;height:1px;background:#414141"></div>
<svg style="position:absolute;left:1094.5px;top:543px" width="12" height="12" viewBox="0 0 24 24" fill="none" stroke="#444" stroke-width="2.1" stroke-linecap="round"><g transform="rotate(-6 12 12)"><path d="M10 13a5 5 0 0 0 7.54.54l3-3a5 5 0 0 0-7.07-7.07l-1.72 1.71"/><path d="M14 11a5 5 0 0 0-7.54-.54l-3 3a5 5 0 0 0 7.07 7.07l1.71-1.71"/></g></svg>
<div class="t" style="left:1145.60px;top:501.00px;font-size:15.3px;line-height:100px;color:#414141;font-weight:normal;font-family:'Liberation Sans', sans-serif;transform:scaleX(0.9464);">Factura</div>
<div style="position:absolute;left:1277px;top:538px;width:24px;height:24px;background:#fff;border-radius:4px"></div>
<div style="position:absolute;left:1309px;top:538px;width:24px;height:24px;background:#fff;border-radius:4px"></div>
<div style="position:absolute;left:1341px;top:538px;width:24px;height:24px;background:#fff;border-radius:4px"></div>
<svg style="position:absolute;left:1276px;top:538px" width="90" height="24" viewBox="1276 0 90 24" fill="none" stroke="#383838" stroke-width="1.25"><path d="M1282.2 3.5 H1295.8 Q1297.6 3.5 1297.6 5.3 V14.6 Q1297.6 16.4 1295.8 16.4 H1292.4 L1289 20.2 L1285.6 16.4 H1282.2 Q1280.4 16.4 1280.4 14.6 V5.3 Q1280.4 3.5 1282.2 3.5 Z" stroke-linejoin="round"/><path d="M1283.6 7.3 H1294.3 M1283.6 10.1 H1294.3 M1283.6 12.9 H1289.6" stroke-linecap="round"/><circle cx="1321" cy="7.5" r="1.7"/><path d="M1321 9.1 V11.5 M1314.2 12.4 V11.5 H1327.8 V12.4"/><circle cx="1314.2" cy="16.4" r="1.7"/><circle cx="1321" cy="16.4" r="1.7"/><circle cx="1327.8" cy="16.4" r="1.7"/><path d="M1344.5 11.8 Q1348.5 6.3 1353 6.3 Q1357.5 6.3 1361.6 11.8 Q1357.5 17.5 1353 17.5 Q1348.5 17.5 1344.5 11.8 Z" stroke-linejoin="round"/><circle cx="1353" cy="11.8" r="3.3"/></svg>
<div style="position:absolute;left:17px;top:574px;width:1397px;height:48px;background:#fff"></div>
<div style="position:absolute;left:1414px;top:574px;width:9px;height:48px;background:#34a85c"></div>
<div class="t" style="left:23.30px;top:549.00px;font-size:16px;line-height:100px;color:#34a85c;font-weight:normal;font-family:'Liberation Sans', sans-serif;transform:scaleX(0.8183);-webkit-text-stroke:0.7px #34a85c;">68%</div>
<div class="t" style="left:108.30px;top:549.00px;font-size:15.3px;line-height:100px;color:#414141;font-weight:normal;font-family:'Liberation Sans', sans-serif;">10384</div>
<div class="t" style="left:203.30px;top:549.00px;font-size:15.3px;line-height:100px;color:#414141;font-weight:normal;font-family:'Liberation Sans', sans-serif;transform:scaleX(0.9309);">Grande</div>
<div class="t" style="left:319.20px;top:549.00px;font-size:15.3px;line-height:100px;color:#414141;font-weight:normal;font-family:'Liberation Sans', sans-serif;transform:scaleX(0.9620);">Apro. Ejecutivo</div>
<div class="t" style="left:440.20px;top:549.00px;font-size:15.3px;line-height:100px;color:#414141;font-weight:normal;font-family:'Liberation Sans', sans-serif;transform:scaleX(1.0110);">01:00</div>
<div class="t" style="left:553.40px;top:549.00px;font-size:15.3px;line-height:100px;color:#414141;font-weight:normal;font-family:'Liberation Sans', sans-serif;transform:scaleX(0.9877);">33:13 hrs</div>
<div class="t" style="left:675.60px;top:549.00px;font-size:15.3px;line-height:100px;color:#414141;font-weight:normal;font-family:'Liberation Sans', sans-serif;transform:scaleX(0.8199);">CPL</div>
<div class="t" style="left:750.60px;top:549.00px;font-size:15.3px;line-height:100px;color:#414141;font-weight:normal;font-family:'Liberation Sans', sans-serif;transform:scaleX(1.0068);">$5.696.262</div>
<div class="t" style="left:845.00px;top:549.00px;font-size:15.3px;line-height:100px;color:#414141;font-weight:normal;font-family:'Liberation Sans', sans-serif;transform:scaleX(1.0640);">77879654-2</div>
<div style="position:absolute;left:845px;top:605.5px;width:87px;height:1px;background:#414141"></div>
<svg style="position:absolute;left:938.5px;top:591px" width="12" height="12" viewBox="0 0 24 24" fill="none" stroke="#444" stroke-width="2.1" stroke-linecap="round"><g transform="rotate(-6 12 12)"><path d="M10 13a5 5 0 0 0 7.54.54l3-3a5 5 0 0 0-7.07-7.07l-1.72 1.71"/><path d="M14 11a5 5 0 0 0-7.54-.54l-3 3a5 5 0 0 0 7.07 7.07l1.71-1.71"/></g></svg>
<div class="t" style="left:969.00px;top:549.00px;font-size:15.3px;line-height:100px;color:#414141;font-weight:normal;font-family:'Liberation Sans', sans-serif;transform:scaleX(0.9439);">Pullman Cargo SA</div>
<div style="position:absolute;left:969px;top:605.5px;width:119px;height:1px;background:#414141"></div>
<svg style="position:absolute;left:1094.5px;top:591px" width="12" height="12" viewBox="0 0 24 24" fill="none" stroke="#444" stroke-width="2.1" stroke-linecap="round"><g transform="rotate(-6 12 12)"><path d="M10 13a5 5 0 0 0 7.54.54l3-3a5 5 0 0 0-7.07-7.07l-1.72 1.71"/><path d="M14 11a5 5 0 0 0-7.54-.54l-3 3a5 5 0 0 0 7.07 7.07l1.71-1.71"/></g></svg>
<div class="t" style="left:1145.60px;top:549.00px;font-size:15.3px;line-height:100px;color:#414141;font-weight:normal;font-family:'Liberation Sans', sans-serif;transform:scaleX(0.9464);">Factura</div>
<svg style="position:absolute;left:1276px;top:586px" width="90" height="24" viewBox="1276 0 90 24" fill="none" stroke="#383838" stroke-width="1.25"><path d="M1282.2 3.5 H1295.8 Q1297.6 3.5 1297.6 5.3 V14.6 Q1297.6 16.4 1295.8 16.4 H1292.4 L1289 20.2 L1285.6 16.4 H1282.2 Q1280.4 16.4 1280.4 14.6 V5.3 Q1280.4 3.5 1282.2 3.5 Z" stroke-linejoin="round"/><path d="M1283.6 7.3 H1294.3 M1283.6 10.1 H1294.3 M1283.6 12.9 H1289.6" stroke-linecap="round"/><circle cx="1321" cy="7.5" r="1.7"/><path d="M1321 9.1 V11.5 M1314.2 12.4 V11.5 H1327.8 V12.4"/><circle cx="1314.2" cy="16.4" r="1.7"/><circle cx="1321" cy="16.4" r="1.7"/><circle cx="1327.8" cy="16.4" r="1.7"/><path d="M1344.5 11.8 Q1348.5 6.3 1353 6.3 Q1357.5 6.3 1361.6 11.8 Q1357.5 17.5 1353 17.5 Q1348.5 17.5 1344.5 11.8 Z" stroke-linejoin="round"/><circle cx="1353" cy="11.8" r="3.3"/></svg>
<div style="position:absolute;left:17px;top:622px;width:1397px;height:48px;background:#f0f0f0"></div>
<div style="position:absolute;left:1414px;top:622px;width:9px;height:48px;background:#dcb000"></div>
<div class="t" style="left:23.30px;top:597.00px;font-size:16px;line-height:100px;color:#dcb000;font-weight:normal;font-family:'Liberation Sans', sans-serif;transform:scaleX(0.8183);-webkit-text-stroke:0.7px #dcb000;">68%</div>
<div class="t" style="left:108.30px;top:597.00px;font-size:15.3px;line-height:100px;color:#414141;font-weight:normal;font-family:'Liberation Sans', sans-serif;">10384</div>
<div class="t" style="left:203.30px;top:597.00px;font-size:15.3px;line-height:100px;color:#414141;font-weight:normal;font-family:'Liberation Sans', sans-serif;transform:scaleX(0.9309);">Grande</div>
<div class="t" style="left:319.20px;top:597.00px;font-size:15.3px;line-height:100px;color:#414141;font-weight:normal;font-family:'Liberation Sans', sans-serif;transform:scaleX(0.9620);">Apro. Ejecutivo</div>
<div class="t" style="left:440.20px;top:597.00px;font-size:15.3px;line-height:100px;color:#414141;font-weight:normal;font-family:'Liberation Sans', sans-serif;transform:scaleX(1.0110);">01:00</div>
<div class="t" style="left:553.40px;top:597.00px;font-size:15.3px;line-height:100px;color:#ff2a1a;font-weight:normal;font-family:'Liberation Sans', sans-serif;transform:scaleX(0.9877);">33:13 hrs</div>
<div class="t" style="left:675.60px;top:597.00px;font-size:15.3px;line-height:100px;color:#414141;font-weight:normal;font-family:'Liberation Sans', sans-serif;transform:scaleX(0.8199);">CPL</div>
<div class="t" style="left:750.60px;top:597.00px;font-size:15.3px;line-height:100px;color:#414141;font-weight:normal;font-family:'Liberation Sans', sans-serif;transform:scaleX(1.0068);">$5.696.262</div>
<div class="t" style="left:845.00px;top:597.00px;font-size:15.3px;line-height:100px;color:#414141;font-weight:normal;font-family:'Liberation Sans', sans-serif;transform:scaleX(1.0640);">77879654-2</div>
<div style="position:absolute;left:845px;top:653.5px;width:87px;height:1px;background:#414141"></div>
<svg style="position:absolute;left:938.5px;top:639px" width="12" height="12" viewBox="0 0 24 24" fill="none" stroke="#444" stroke-width="2.1" stroke-linecap="round"><g transform="rotate(-6 12 12)"><path d="M10 13a5 5 0 0 0 7.54.54l3-3a5 5 0 0 0-7.07-7.07l-1.72 1.71"/><path d="M14 11a5 5 0 0 0-7.54-.54l-3 3a5 5 0 0 0 7.07 7.07l1.71-1.71"/></g></svg>
<div class="t" style="left:969.00px;top:597.00px;font-size:15.3px;line-height:100px;color:#414141;font-weight:normal;font-family:'Liberation Sans', sans-serif;transform:scaleX(0.9439);">Pullman Cargo SA</div>
<div style="position:absolute;left:969px;top:653.5px;width:119px;height:1px;background:#414141"></div>
<svg style="position:absolute;left:1094.5px;top:639px" width="12" height="12" viewBox="0 0 24 24" fill="none" stroke="#444" stroke-width="2.1" stroke-linecap="round"><g transform="rotate(-6 12 12)"><path d="M10 13a5 5 0 0 0 7.54.54l3-3a5 5 0 0 0-7.07-7.07l-1.72 1.71"/><path d="M14 11a5 5 0 0 0-7.54-.54l-3 3a5 5 0 0 0 7.07 7.07l1.71-1.71"/></g></svg>
<div class="t" style="left:1145.60px;top:597.00px;font-size:15.3px;line-height:100px;color:#414141;font-weight:normal;font-family:'Liberation Sans', sans-serif;transform:scaleX(0.9464);">Factura</div>
<div style="position:absolute;left:1277px;top:634px;width:24px;height:24px;background:#fff;border-radius:4px"></div>
<div style="position:absolute;left:1309px;top:634px;width:24px;height:24px;background:#fff;border-radius:4px"></div>
<div style="position:absolute;left:1341px;top:634px;width:24px;height:24px;background:#fff;border-radius:4px"></div>
<svg style="position:absolute;left:1276px;top:634px" width="90" height="24" viewBox="1276 0 90 24" fill="none" stroke="#383838" stroke-width="1.25"><path d="M1282.2 3.5 H1295.8 Q1297.6 3.5 1297.6 5.3 V14.6 Q1297.6 16.4 1295.8 16.4 H1292.4 L1289 20.2 L1285.6 16.4 H1282.2 Q1280.4 16.4 1280.4 14.6 V5.3 Q1280.4 3.5 1282.2 3.5 Z" stroke-linejoin="round"/><path d="M1283.6 7.3 H1294.3 M1283.6 10.1 H1294.3 M1283.6 12.9 H1289.6" stroke-linecap="round"/><circle cx="1321" cy="7.5" r="1.7"/><path d="M1321 9.1 V11.5 M1314.2 12.4 V11.5 H1327.8 V12.4"/><circle cx="1314.2" cy="16.4" r="1.7"/><circle cx="1321" cy="16.4" r="1.7"/><circle cx="1327.8" cy="16.4" r="1.7"/><path d="M1344.5 11.8 Q1348.5 6.3 1353 6.3 Q1357.5 6.3 1361.6 11.8 Q1357.5 17.5 1353 17.5 Q1348.5 17.5 1344.5 11.8 Z" stroke-linejoin="round"/><circle cx="1353" cy="11.8" r="3.3"/></svg>
<div style="position:absolute;left:17px;top:670px;width:1397px;height:48px;background:#fff"></div>
<div style="position:absolute;left:1414px;top:670px;width:9px;height:48px;background:#dcb000"></div>
<div class="t" style="left:23.30px;top:645.00px;font-size:16px;line-height:100px;color:#dcb000;font-weight:normal;font-family:'Liberation Sans', sans-serif;transform:scaleX(0.8183);-webkit-text-stroke:0.7px #dcb000;">68%</div>
<div class="t" style="left:108.30px;top:645.00px;font-size:15.3px;line-height:100px;color:#414141;font-weight:normal;font-family:'Liberation Sans', sans-serif;">10384</div>
<div class="t" style="left:203.30px;top:645.00px;font-size:15.3px;line-height:100px;color:#414141;font-weight:normal;font-family:'Liberation Sans', sans-serif;transform:scaleX(0.9309);">Grande</div>
<div class="t" style="left:319.20px;top:645.00px;font-size:15.3px;line-height:100px;color:#414141;font-weight:normal;font-family:'Liberation Sans', sans-serif;transform:scaleX(0.9620);">Apro. Ejecutivo</div>
<div class="t" style="left:440.20px;top:645.00px;font-size:15.3px;line-height:100px;color:#414141;font-weight:normal;font-family:'Liberation Sans', sans-serif;transform:scaleX(1.0110);">01:00</div>
<div class="t" style="left:553.40px;top:645.00px;font-size:15.3px;line-height:100px;color:#ff2a1a;font-weight:normal;font-family:'Liberation Sans', sans-serif;transform:scaleX(0.9877);">33:13 hrs</div>
<div class="t" style="left:675.60px;top:645.00px;font-size:15.3px;line-height:100px;color:#414141;font-weight:normal;font-family:'Liberation Sans', sans-serif;transform:scaleX(0.8199);">CPL</div>
<div class="t" style="left:750.60px;top:645.00px;font-size:15.3px;line-height:100px;color:#414141;font-weight:normal;font-family:'Liberation Sans', sans-serif;transform:scaleX(1.0068);">$5.696.262</div>
<div class="t" style="left:845.00px;top:645.00px;font-size:15.3px;line-height:100px;color:#414141;font-weight:normal;font-family:'Liberation Sans', sans-serif;transform:scaleX(1.0640);">77879654-2</div>
<div style="position:absolute;left:845px;top:701.5px;width:87px;height:1px;background:#414141"></div>
<svg style="position:absolute;left:938.5px;top:687px" width="12" height="12" viewBox="0 0 24 24" fill="none" stroke="#444" stroke-width="2.1" stroke-linecap="round"><g transform="rotate(-6 12 12)"><path d="M10 13a5 5 0 0 0 7.54.54l3-3a5 5 0 0 0-7.07-7.07l-1.72 1.71"/><path d="M14 11a5 5 0 0 0-7.54-.54l-3 3a5 5 0 0 0 7.07 7.07l1.71-1.71"/></g></svg>
<div class="t" style="left:969.00px;top:645.00px;font-size:15.3px;line-height:100px;color:#414141;font-weight:normal;font-family:'Liberation Sans', sans-serif;transform:scaleX(0.9439);">Pullman Cargo SA</div>
<div style="position:absolute;left:969px;top:701.5px;width:119px;height:1px;background:#414141"></div>
<svg style="position:absolute;left:1094.5px;top:687px" width="12" height="12" viewBox="0 0 24 24" fill="none" stroke="#444" stroke-width="2.1" stroke-linecap="round"><g transform="rotate(-6 12 12)"><path d="M10 13a5 5 0 0 0 7.54.54l3-3a5 5 0 0 0-7.07-7.07l-1.72 1.71"/><path d="M14 11a5 5 0 0 0-7.54-.54l-3 3a5 5 0 0 0 7.07 7.07l1.71-1.71"/></g></svg>
<div class="t" style="left:1145.60px;top:645.00px;font-size:15.3px;line-height:100px;color:#414141;font-weight:normal;font-family:'Liberation Sans', sans-serif;transform:scaleX(0.9464);">Factura</div>
<svg style="position:absolute;left:1276px;top:682px" width="90" height="24" viewBox="1276 0 90 24" fill="none" stroke="#383838" stroke-width="1.25"><path d="M1282.2 3.5 H1295.8 Q1297.6 3.5 1297.6 5.3 V14.6 Q1297.6 16.4 1295.8 16.4 H1292.4 L1289 20.2 L1285.6 16.4 H1282.2 Q1280.4 16.4 1280.4 14.6 V5.3 Q1280.4 3.5 1282.2 3.5 Z" stroke-linejoin="round"/><path d="M1283.6 7.3 H1294.3 M1283.6 10.1 H1294.3 M1283.6 12.9 H1289.6" stroke-linecap="round"/><circle cx="1321" cy="7.5" r="1.7"/><path d="M1321 9.1 V11.5 M1314.2 12.4 V11.5 H1327.8 V12.4"/><circle cx="1314.2" cy="16.4" r="1.7"/><circle cx="1321" cy="16.4" r="1.7"/><circle cx="1327.8" cy="16.4" r="1.7"/><path d="M1344.5 11.8 Q1348.5 6.3 1353 6.3 Q1357.5 6.3 1361.6 11.8 Q1357.5 17.5 1353 17.5 Q1348.5 17.5 1344.5 11.8 Z" stroke-linejoin="round"/><circle cx="1353" cy="11.8" r="3.3"/></svg>
<div style="position:absolute;left:17px;top:718px;width:1397px;height:48px;background:#f0f0f0"></div>
<div style="position:absolute;left:1414px;top:718px;width:9px;height:48px;background:#ff2200"></div>
<div class="t" style="left:23.30px;top:693.00px;font-size:16px;line-height:100px;color:#ff2200;font-weight:normal;font-family:'Liberation Sans', sans-serif;transform:scaleX(0.8183);-webkit-text-stroke:0.7px #ff2200;">68%</div>
<div class="t" style="left:108.30px;top:693.00px;font-size:15.3px;line-height:100px;color:#414141;font-weight:normal;font-family:'Liberation Sans', sans-serif;">10384</div>
<div class="t" style="left:203.30px;top:693.00px;font-size:15.3px;line-height:100px;color:#414141;font-weight:normal;font-family:'Liberation Sans', sans-serif;transform:scaleX(0.9309);">Grande</div>
<div class="t" style="left:319.20px;top:693.00px;font-size:15.3px;line-height:100px;color:#414141;font-weight:normal;font-family:'Liberation Sans', sans-serif;transform:scaleX(0.9620);">Apro. Ejecutivo</div>
<div class="t" style="left:440.20px;top:693.00px;font-size:15.3px;line-height:100px;color:#414141;font-weight:normal;font-family:'Liberation Sans', sans-serif;transform:scaleX(1.0110);">01:00</div>
<div class="t" style="left:553.40px;top:693.00px;font-size:15.3px;line-height:100px;color:#ff2a1a;font-weight:normal;font-family:'Liberation Sans', sans-serif;transform:scaleX(0.9877);">33:13 hrs</div>
<div class="t" style="left:675.60px;top:693.00px;font-size:15.3px;line-height:100px;color:#414141;font-weight:normal;font-family:'Liberation Sans', sans-serif;transform:scaleX(0.8199);">CPL</div>
<div class="t" style="left:750.60px;top:693.00px;font-size:15.3px;line-height:100px;color:#414141;font-weight:normal;font-family:'Liberation Sans', sans-serif;transform:scaleX(1.0068);">$5.696.262</div>
<div class="t" style="left:845.00px;top:693.00px;font-size:15.3px;line-height:100px;color:#414141;font-weight:normal;font-family:'Liberation Sans', sans-serif;transform:scaleX(1.0640);">77879654-2</div>
<div style="position:absolute;left:845px;top:749.5px;width:87px;height:1px;background:#414141"></div>
<svg style="position:absolute;left:938.5px;top:735px" width="12" height="12" viewBox="0 0 24 24" fill="none" stroke="#444" stroke-width="2.1" stroke-linecap="round"><g transform="rotate(-6 12 12)"><path d="M10 13a5 5 0 0 0 7.54.54l3-3a5 5 0 0 0-7.07-7.07l-1.72 1.71"/><path d="M14 11a5 5 0 0 0-7.54-.54l-3 3a5 5 0 0 0 7.07 7.07l1.71-1.71"/></g></svg>
<div class="t" style="left:969.00px;top:693.00px;font-size:15.3px;line-height:100px;color:#414141;font-weight:normal;font-family:'Liberation Sans', sans-serif;transform:scaleX(0.9439);">Pullman Cargo SA</div>
<div style="position:absolute;left:969px;top:749.5px;width:119px;height:1px;background:#414141"></div>
<svg style="position:absolute;left:1094.5px;top:735px" width="12" height="12" viewBox="0 0 24 24" fill="none" stroke="#444" stroke-width="2.1" stroke-linecap="round"><g transform="rotate(-6 12 12)"><path d="M10 13a5 5 0 0 0 7.54.54l3-3a5 5 0 0 0-7.07-7.07l-1.72 1.71"/><path d="M14 11a5 5 0 0 0-7.54-.54l-3 3a5 5 0 0 0 7.07 7.07l1.71-1.71"/></g></svg>
<div class="t" style="left:1145.60px;top:693.00px;font-size:15.3px;line-height:100px;color:#414141;font-weight:normal;font-family:'Liberation Sans', sans-serif;transform:scaleX(0.9464);">Factura</div>
<div style="position:absolute;left:1277px;top:730px;width:24px;height:24px;background:#fff;border-radius:4px"></div>
<div style="position:absolute;left:1309px;top:730px;width:24px;height:24px;background:#fff;border-radius:4px"></div>
<div style="position:absolute;left:1341px;top:730px;width:24px;height:24px;background:#fff;border-radius:4px"></div>
<svg style="position:absolute;left:1276px;top:730px" width="90" height="24" viewBox="1276 0 90 24" fill="none" stroke="#383838" stroke-width="1.25"><path d="M1282.2 3.5 H1295.8 Q1297.6 3.5 1297.6 5.3 V14.6 Q1297.6 16.4 1295.8 16.4 H1292.4 L1289 20.2 L1285.6 16.4 H1282.2 Q1280.4 16.4 1280.4 14.6 V5.3 Q1280.4 3.5 1282.2 3.5 Z" stroke-linejoin="round"/><path d="M1283.6 7.3 H1294.3 M1283.6 10.1 H1294.3 M1283.6 12.9 H1289.6" stroke-linecap="round"/><circle cx="1321" cy="7.5" r="1.7"/><path d="M1321 9.1 V11.5 M1314.2 12.4 V11.5 H1327.8 V12.4"/><circle cx="1314.2" cy="16.4" r="1.7"/><circle cx="1321" cy="16.4" r="1.7"/><circle cx="1327.8" cy="16.4" r="1.7"/><path d="M1344.5 11.8 Q1348.5 6.3 1353 6.3 Q1357.5 6.3 1361.6 11.8 Q1357.5 17.5 1353 17.5 Q1348.5 17.5 1344.5 11.8 Z" stroke-linejoin="round"/><circle cx="1353" cy="11.8" r="3.3"/></svg>
<div style="position:absolute;left:17px;top:766px;width:1397px;height:48px;background:#fff"></div>
<div style="position:absolute;left:1414px;top:766px;width:9px;height:48px;background:#dcb000"></div>
<div class="t" style="left:23.30px;top:741.00px;font-size:16px;line-height:100px;color:#f0994a;font-weight:normal;font-family:'Liberation Sans', sans-serif;transform:scaleX(0.8183);-webkit-text-stroke:0.7px #f0994a;">68%</div>
<div class="t" style="left:108.30px;top:741.00px;font-size:15.3px;line-height:100px;color:#414141;font-weight:normal;font-family:'Liberation Sans', sans-serif;">10384</div>
<div class="t" style="left:203.30px;top:741.00px;font-size:15.3px;line-height:100px;color:#414141;font-weight:normal;font-family:'Liberation Sans', sans-serif;transform:scaleX(0.9309);">Grande</div>
<div class="t" style="left:319.20px;top:741.00px;font-size:15.3px;line-height:100px;color:#414141;font-weight:normal;font-family:'Liberation Sans', sans-serif;transform:scaleX(0.9620);">Apro. Ejecutivo</div>
<div class="t" style="left:440.20px;top:741.00px;font-size:15.3px;line-height:100px;color:#414141;font-weight:normal;font-family:'Liberation Sans', sans-serif;transform:scaleX(1.0110);">01:00</div>
<div class="t" style="left:553.40px;top:741.00px;font-size:15.3px;line-height:100px;color:#414141;font-weight:normal;font-family:'Liberation Sans', sans-serif;transform:scaleX(0.9877);">33:13 hrs</div>
<div class="t" style="left:675.60px;top:741.00px;font-size:15.3px;line-height:100px;color:#414141;font-weight:normal;font-family:'Liberation Sans', sans-serif;transform:scaleX(0.8199);">CPL</div>
<div class="t" style="left:750.60px;top:741.00px;font-size:15.3px;line-height:100px;color:#414141;font-weight:normal;font-family:'Liberation Sans', sans-serif;transform:scaleX(1.0068);">$5.696.262</div>
<div class="t" style="left:845.00px;top:741.00px;font-size:15.3px;line-height:100px;color:#414141;font-weight:normal;font-family:'Liberation Sans', sans-serif;transform:scaleX(1.0640);">77879654-2</div>
<div style="position:absolute;left:845px;top:797.5px;width:87px;height:1px;background:#414141"></div>
<svg style="position:absolute;left:938.5px;top:783px" width="12" height="12" viewBox="0 0 24 24" fill="none" stroke="#444" stroke-width="2.1" stroke-linecap="round"><g transform="rotate(-6 12 12)"><path d="M10 13a5 5 0 0 0 7.54.54l3-3a5 5 0 0 0-7.07-7.07l-1.72 1.71"/><path d="M14 11a5 5 0 0 0-7.54-.54l-3 3a5 5 0 0 0 7.07 7.07l1.71-1.71"/></g></svg>
<div class="t" style="left:969.00px;top:741.00px;font-size:15.3px;line-height:100px;color:#414141;font-weight:normal;font-family:'Liberation Sans', sans-serif;transform:scaleX(0.9439);">Pullman Cargo SA</div>
<div style="position:absolute;left:969px;top:797.5px;width:119px;height:1px;background:#414141"></div>
<svg style="position:absolute;left:1094.5px;top:783px" width="12" height="12" viewBox="0 0 24 24" fill="none" stroke="#444" stroke-width="2.1" stroke-linecap="round"><g transform="rotate(-6 12 12)"><path d="M10 13a5 5 0 0 0 7.54.54l3-3a5 5 0 0 0-7.07-7.07l-1.72 1.71"/><path d="M14 11a5 5 0 0 0-7.54-.54l-3 3a5 5 0 0 0 7.07 7.07l1.71-1.71"/></g></svg>
<div class="t" style="left:1145.60px;top:741.00px;font-size:15.3px;line-height:100px;color:#414141;font-weight:normal;font-family:'Liberation Sans', sans-serif;transform:scaleX(0.9464);">Factura</div>
<svg style="position:absolute;left:1276px;top:778px" width="90" height="24" viewBox="1276 0 90 24" fill="none" stroke="#383838" stroke-width="1.25"><path d="M1282.2 3.5 H1295.8 Q1297.6 3.5 1297.6 5.3 V14.6 Q1297.6 16.4 1295.8 16.4 H1292.4 L1289 20.2 L1285.6 16.4 H1282.2 Q1280.4 16.4 1280.4 14.6 V5.3 Q1280.4 3.5 1282.2 3.5 Z" stroke-linejoin="round"/><path d="M1283.6 7.3 H1294.3 M1283.6 10.1 H1294.3 M1283.6 12.9 H1289.6" stroke-linecap="round"/><circle cx="1321" cy="7.5" r="1.7"/><path d="M1321 9.1 V11.5 M1314.2 12.4 V11.5 H1327.8 V12.4"/><circle cx="1314.2" cy="16.4" r="1.7"/><circle cx="1321" cy="16.4" r="1.7"/><circle cx="1327.8" cy="16.4" r="1.7"/><path d="M1344.5 11.8 Q1348.5 6.3 1353 6.3 Q1357.5 6.3 1361.6 11.8 Q1357.5 17.5 1353 17.5 Q1348.5 17.5 1344.5 11.8 Z" stroke-linejoin="round"/><circle cx="1353" cy="11.8" r="3.3"/></svg>
<div style="position:absolute;left:17px;top:814px;width:1397px;height:48px;background:#f0f0f0"></div>
<div style="position:absolute;left:1414px;top:814px;width:9px;height:48px;background:#ff2200"></div>
<div class="t" style="left:23.30px;top:789.00px;font-size:16px;line-height:100px;color:#ff2200;font-weight:normal;font-family:'Liberation Sans', sans-serif;transform:scaleX(0.8183);-webkit-text-stroke:0.7px #ff2200;">68%</div>
<div class="t" style="left:108.30px;top:789.00px;font-size:15.3px;line-height:100px;color:#414141;font-weight:normal;font-family:'Liberation Sans', sans-serif;">10384</div>
<div class="t" style="left:203.30px;top:789.00px;font-size:15.3px;line-height:100px;color:#414141;font-weight:normal;font-family:'Liberation Sans', sans-serif;transform:scaleX(0.9309);">Grande</div>
<div class="t" style="left:319.20px;top:789.00px;font-size:15.3px;line-height:100px;color:#414141;font-weight:normal;font-family:'Liberation Sans', sans-serif;transform:scaleX(0.9620);">Apro. Ejecutivo</div>
<div class="t" style="left:440.20px;top:789.00px;font-size:15.3px;line-height:100px;color:#414141;font-weight:normal;font-family:'Liberation Sans', sans-serif;transform:scaleX(1.0110);">01:00</div>
<div class="t" style="left:553.40px;top:789.00px;font-size:15.3px;line-height:100px;color:#ff2a1a;font-weight:normal;font-family:'Liberation Sans', sans-serif;transform:scaleX(0.9877);">33:13 hrs</div>
<div class="t" style="left:675.60px;top:789.00px;font-size:15.3px;line-height:100px;color:#414141;font-weight:normal;font-family:'Liberation Sans', sans-serif;transform:scaleX(0.8199);">CPL</div>
<div class="t" style="left:750.60px;top:789.00px;font-size:15.3px;line-height:100px;color:#414141;font-weight:normal;font-family:'Liberation Sans', sans-serif;transform:scaleX(1.0068);">$5.696.262</div>
<div class="t" style="left:845.00px;top:789.00px;font-size:15.3px;line-height:100px;color:#414141;font-weight:normal;font-family:'Liberation Sans', sans-serif;transform:scaleX(1.0640);">77879654-2</div>
<div style="position:absolute;left:845px;top:845.5px;width:87px;height:1px;background:#414141"></div>
<svg style="position:absolute;left:938.5px;top:831px" width="12" height="12" viewBox="0 0 24 24" fill="none" stroke="#444" stroke-width="2.1" stroke-linecap="round"><g transform="rotate(-6 12 12)"><path d="M10 13a5 5 0 0 0 7.54.54l3-3a5 5 0 0 0-7.07-7.07l-1.72 1.71"/><path d="M14 11a5 5 0 0 0-7.54-.54l-3 3a5 5 0 0 0 7.07 7.07l1.71-1.71"/></g></svg>
<div class="t" style="left:969.00px;top:789.00px;font-size:15.3px;line-height:100px;color:#414141;font-weight:normal;font-family:'Liberation Sans', sans-serif;transform:scaleX(0.9439);">Pullman Cargo SA</div>
<div style="position:absolute;left:969px;top:845.5px;width:119px;height:1px;background:#414141"></div>
<svg style="position:absolute;left:1094.5px;top:831px" width="12" height="12" viewBox="0 0 24 24" fill="none" stroke="#444" stroke-width="2.1" stroke-linecap="round"><g transform="rotate(-6 12 12)"><path d="M10 13a5 5 0 0 0 7.54.54l3-3a5 5 0 0 0-7.07-7.07l-1.72 1.71"/><path d="M14 11a5 5 0 0 0-7.54-.54l-3 3a5 5 0 0 0 7.07 7.07l1.71-1.71"/></g></svg>
<div class="t" style="left:1145.60px;top:789.00px;font-size:15.3px;line-height:100px;color:#414141;font-weight:normal;font-family:'Liberation Sans', sans-serif;transform:scaleX(0.9464);">Factura</div>
<div style="position:absolute;left:1277px;top:826px;width:24px;height:24px;background:#fff;border-radius:4px"></div>
<div style="position:absolute;left:1309px;top:826px;width:24px;height:24px;background:#fff;border-radius:4px"></div>
<div style="position:absolute;left:1341px;top:826px;width:24px;height:24px;background:#fff;border-radius:4px"></div>
<svg style="position:absolute;left:1276px;top:826px" width="90" height="24" viewBox="1276 0 90 24" fill="none" stroke="#383838" stroke-width="1.25"><path d="M1282.2 3.5 H1295.8 Q1297.6 3.5 1297.6 5.3 V14.6 Q1297.6 16.4 1295.8 16.4 H1292.4 L1289 20.2 L1285.6 16.4 H1282.2 Q1280.4 16.4 1280.4 14.6 V5.3 Q1280.4 3.5 1282.2 3.5 Z" stroke-linejoin="round"/><path d="M1283.6 7.3 H1294.3 M1283.6 10.1 H1294.3 M1283.6 12.9 H1289.6" stroke-linecap="round"/><circle cx="1321" cy="7.5" r="1.7"/><path d="M1321 9.1 V11.5 M1314.2 12.4 V11.5 H1327.8 V12.4"/><circle cx="1314.2" cy="16.4" r="1.7"/><circle cx="1321" cy="16.4" r="1.7"/><circle cx="1327.8" cy="16.4" r="1.7"/><path d="M1344.5 11.8 Q1348.5 6.3 1353 6.3 Q1357.5 6.3 1361.6 11.8 Q1357.5 17.5 1353 17.5 Q1348.5 17.5 1344.5 11.8 Z" stroke-linejoin="round"/><circle cx="1353" cy="11.8" r="3.3"/></svg>
<div style="position:absolute;left:17px;top:862px;width:1397px;height:48px;background:#fff"></div>
<div style="position:absolute;left:1414px;top:862px;width:9px;height:48px;background:#dcb000"></div>
<div class="t" style="left:23.30px;top:837.00px;font-size:16px;line-height:100px;color:#f0994a;font-weight:normal;font-family:'Liberation Sans', sans-serif;transform:scaleX(0.8183);-webkit-text-stroke:0.7px #f0994a;">68%</div>
<div class="t" style="left:108.30px;top:837.00px;font-size:15.3px;line-height:100px;color:#414141;font-weight:normal;font-family:'Liberation Sans', sans-serif;">10384</div>
<div class="t" style="left:203.30px;top:837.00px;font-size:15.3px;line-height:100px;color:#414141;font-weight:normal;font-family:'Liberation Sans', sans-serif;transform:scaleX(0.9309);">Grande</div>
<div class="t" style="left:319.20px;top:837.00px;font-size:15.3px;line-height:100px;color:#414141;font-weight:normal;font-family:'Liberation Sans', sans-serif;transform:scaleX(0.9620);">Apro. Ejecutivo</div>
<div class="t" style="left:440.20px;top:837.00px;font-size:15.3px;line-height:100px;color:#414141;font-weight:normal;font-family:'Liberation Sans', sans-serif;transform:scaleX(1.0110);">01:00</div>
<div class="t" style="left:553.40px;top:837.00px;font-size:15.3px;line-height:100px;color:#414141;font-weight:normal;font-family:'Liberation Sans', sans-serif;transform:scaleX(0.9877);">33:13 hrs</div>
<div class="t" style="left:675.60px;top:837.00px;font-size:15.3px;line-height:100px;color:#414141;font-weight:normal;font-family:'Liberation Sans', sans-serif;transform:scaleX(0.8199);">CPL</div>
<div class="t" style="left:750.60px;top:837.00px;font-size:15.3px;line-height:100px;color:#414141;font-weight:normal;font-family:'Liberation Sans', sans-serif;transform:scaleX(1.0068);">$5.696.262</div>
<div class="t" style="left:845.00px;top:837.00px;font-size:15.3px;line-height:100px;color:#414141;font-weight:normal;font-family:'Liberation Sans', sans-serif;transform:scaleX(1.0640);">77879654-2</div>
<div style="position:absolute;left:845px;top:893.5px;width:87px;height:1px;background:#414141"></div>
<svg style="position:absolute;left:938.5px;top:879px" width="12" height="12" viewBox="0 0 24 24" fill="none" stroke="#444" stroke-width="2.1" stroke-linecap="round"><g transform="rotate(-6 12 12)"><path d="M10 13a5 5 0 0 0 7.54.54l3-3a5 5 0 0 0-7.07-7.07l-1.72 1.71"/><path d="M14 11a5 5 0 0 0-7.54-.54l-3 3a5 5 0 0 0 7.07 7.07l1.71-1.71"/></g></svg>
<div class="t" style="left:969.00px;top:837.00px;font-size:15.3px;line-height:100px;color:#414141;font-weight:normal;font-family:'Liberation Sans', sans-serif;transform:scaleX(0.9439);">Pullman Cargo SA</div>
<div style="position:absolute;left:969px;top:893.5px;width:119px;height:1px;background:#414141"></div>
<svg style="position:absolute;left:1094.5px;top:879px" width="12" height="12" viewBox="0 0 24 24" fill="none" stroke="#444" stroke-width="2.1" stroke-linecap="round"><g transform="rotate(-6 12 12)"><path d="M10 13a5 5 0 0 0 7.54.54l3-3a5 5 0 0 0-7.07-7.07l-1.72 1.71"/><path d="M14 11a5 5 0 0 0-7.54-.54l-3 3a5 5 0 0 0 7.07 7.07l1.71-1.71"/></g></svg>
<div class="t" style="left:1145.60px;top:837.00px;font-size:15.3px;line-height:100px;color:#414141;font-weight:normal;font-family:'Liberation Sans', sans-serif;transform:scaleX(0.9464);">Factura</div>
<svg style="position:absolute;left:1276px;top:874px" width="90" height="24" viewBox="1276 0 90 24" fill="none" stroke="#383838" stroke-width="1.25"><path d="M1282.2 3.5 H1295.8 Q1297.6 3.5 1297.6 5.3 V14.6 Q1297.6 16.4 1295.8 16.4 H1292.4 L1289 20.2 L1285.6 16.4 H1282.2 Q1280.4 16.4 1280.4 14.6 V5.3 Q1280.4 3.5 1282.2 3.5 Z" stroke-linejoin="round"/><path d="M1283.6 7.3 H1294.3 M1283.6 10.1 H1294.3 M1283.6 12.9 H1289.6" stroke-linecap="round"/><circle cx="1321" cy="7.5" r="1.7"/><path d="M1321 9.1 V11.5 M1314.2 12.4 V11.5 H1327.8 V12.4"/><circle cx="1314.2" cy="16.4" r="1.7"/><circle cx="1321" cy="16.4" r="1.7"/><circle cx="1327.8" cy="16.4" r="1.7"/><path d="M1344.5 11.8 Q1348.5 6.3 1353 6.3 Q1357.5 6.3 1361.6 11.8 Q1357.5 17.5 1353 17.5 Q1348.5 17.5 1344.5 11.8 Z" stroke-linejoin="round"/><circle cx="1353" cy="11.8" r="3.3"/></svg>
<div style="position:absolute;left:1245.5px;top:925.5px;width:26px;height:25px;background:#6b2d91;border-radius:4px"></div>
<div class="t" style="left:1255.40px;top:889.00px;font-size:15.5px;line-height:100px;color:#fff;font-weight:normal;font-family:'Liberation Sans', sans-serif;transform:scaleX(0.7310);">1</div>
<div style="position:absolute;left:1273.5px;top:925.5px;width:26px;height:25px;box-sizing:border-box;border:1.5px solid #a887c5;border-radius:4px"></div>
<div class="t" style="left:1282.00px;top:889.00px;font-size:15.5px;line-height:100px;color:#a3a3a3;font-weight:normal;font-family:'Liberation Sans', sans-serif;transform:scaleX(1.0443);">2</div>
<div style="position:absolute;left:1302.5px;top:925.5px;width:26px;height:25px;box-sizing:border-box;border:1.5px solid #a887c5;border-radius:4px"></div>
<div class="t" style="left:1311.00px;top:889.00px;font-size:15.5px;line-height:100px;color:#a3a3a3;font-weight:normal;font-family:'Liberation Sans', sans-serif;transform:scaleX(1.0443);">3</div>
<div style="position:absolute;left:1331.5px;top:925.5px;width:26px;height:25px;box-sizing:border-box;border:1.5px solid #a887c5;border-radius:4px"></div>
<div class="t" style="left:1340.00px;top:889.00px;font-size:15.5px;line-height:100px;color:#a3a3a3;font-weight:normal;font-family:'Liberation Sans', sans-serif;transform:scaleX(1.0443);">4</div>
<div style="position:absolute;left:1360.5px;top:925.5px;width:26px;height:25px;box-sizing:border-box;border:1.5px solid #a887c5;border-radius:4px"></div>
<div class="t" style="left:1369.00px;top:889.00px;font-size:15.5px;line-height:100px;color:#a3a3a3;font-weight:normal;font-family:'Liberation Sans', sans-serif;transform:scaleX(1.0443);">5</div>
<div style="position:absolute;left:1390px;top:926px;width:24px;height:24px;background:#6b2d91;border-radius:4px"></div>
<svg style="position:absolute;left:1390px;top:926px" width="24" height="24" viewBox="0 0 24 24" fill="none" stroke="#fff" stroke-width="1.1"><path d="M7.2 4.8 L15.5 11.7 L7.2 18.5"/></svg>
</body></html>
